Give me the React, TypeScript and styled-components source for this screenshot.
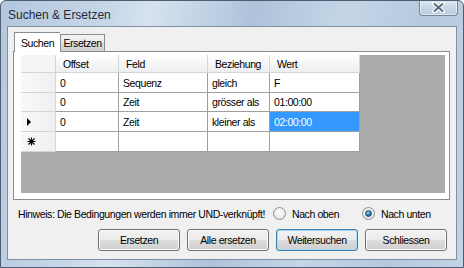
import React from "react";
import styled, { createGlobalStyle, css } from "styled-components";

const GlobalStyle = createGlobalStyle`
  html, body {
    margin: 0;
    padding: 0;
    background: #fff;
  }
  body {
    font-family: "Liberation Sans", Arial, sans-serif;
    font-size: 10.5px;
    letter-spacing: -0.4px;
    color: #000;
  }
`;

type Row = {
  offset: string;
  feld: string;
  beziehung: string;
  wert: string;
  current?: boolean;
};

const rows: Row[] = [
  { offset: "0", feld: "Sequenz", beziehung: "gleich", wert: "F" },
  { offset: "0", feld: "Zeit", beziehung: "grösser als", wert: "01:00:00" },
  { offset: "0", feld: "Zeit", beziehung: "kleiner als", wert: "02:00:00", current: true },
];

const columns = ["Offset", "Feld", "Beziehung", "Wert"];

const Window = styled.div`
  width: 464px;
  height: 268px;
  box-sizing: border-box;
  display: flex;
  flex-direction: column;
  border: 1px solid #4d5d72;
  border-radius: 6px 6px 0 0;
  background: linear-gradient(
    100deg,
    #b3c7dd 0%,
    #c8d7e8 22%,
    #d6e2ee 30%,
    #aec3da 50%,
    #c4d5e6 68%,
    #b5c9de 85%,
    #c3d3e5 100%
  );
  overflow: hidden;
`;

const TitleBar = styled.div`
  height: 25px;
  display: flex;
  justify-content: space-between;
  align-items: flex-start;
  padding: 0 5px 0 7px;
`;

const Title = styled.span`
  font-size: 12px;
  letter-spacing: 0;
  color: #1e2b3b;
  margin-top: 7px;
`;

const CloseButton = styled.div`
  width: 39px;
  height: 16px;
  margin-top: -1px;
  box-sizing: border-box;
  border: 1px solid #73859b;
  border-top: none;
  border-radius: 0 0 4px 4px;
  background: linear-gradient(#dfe8f2, #c9d7e6 50%, #b8cade);
  box-shadow: inset 0 0 0 1px rgba(255, 255, 255, 0.55);
  display: flex;
  align-items: center;
  justify-content: center;
`;

const Client = styled.div`
  flex: 1;
  margin: 0 6px 7px 6px;
  border: 1px solid #7f8fa4;
  background: #f0f0f0;
  display: flex;
  flex-direction: column;
  padding: 5px 6px 0 5px;
`;

const TabStrip = styled.div`
  display: flex;
  align-items: flex-end;
  height: 19px;
  padding-left: 1px;
  position: relative;
  z-index: 1;
`;

const Tab = styled.div<{ $active?: boolean }>`
  box-sizing: border-box;
  border: 1px solid #898c95;
  border-bottom: none;
  display: flex;
  align-items: center;
  justify-content: center;
  ${(p) =>
    p.$active
      ? css`
          width: 46px;
          height: 20px;
          margin-bottom: -1px;
          background: #fff;
          border-right: none;
        `
      : css`
          width: 45px;
          height: 17px;
          background: linear-gradient(#f2f2f2, #ebebeb 50%, #dddddd 50%, #cfcfcf);
        `}
`;

const TabPage = styled.div`
  height: 149px;
  box-sizing: border-box;
  border: 1px solid #898c95;
  background: #fff;
  padding: 3px 3px 5px 6px;
  display: flex;
`;

const GridView = styled.div`
  flex: 1;
  background: #ababab;
  border: 1px solid #fff;
  border-top: none;
  display: flex;
  align-items: flex-start;
`;

const GridTable = styled.div`
  display: grid;
  grid-template-columns: 35px 63px 89px 62px 90px;
  grid-template-rows: 18px 20px 19px 20px 20px;
`;

const HeaderCell = styled.div<{ $corner?: boolean }>`
  box-sizing: border-box;
  background: linear-gradient(#ffffff, #f5f6f7 50%, #eceef0);
  border-right: 1px solid #d5d5d5;
  border-bottom: 1px solid #d5d5d5;
  padding-left: 7px;
  display: flex;
  align-items: center;
  ${(p) =>
    p.$corner &&
    css`
      background: #f4f5f6;
    `}
`;

const RowHeader = styled.div`
  box-sizing: border-box;
  background: linear-gradient(90deg, #f7f8f9, #eef0f2);
  border-right: 1px solid #d5d5d5;
  border-bottom: 1px solid #d5d5d5;
  display: flex;
  align-items: center;
  padding-left: 6px;
`;

const Cell = styled.div<{ $selected?: boolean }>`
  box-sizing: border-box;
  background: ${(p) => (p.$selected ? "#3399ff" : "#fff")};
  color: ${(p) => (p.$selected ? "#fff" : "#000")};
  border-right: 1px solid #a0a0a0;
  border-bottom: 1px solid #a0a0a0;
  padding-left: 4px;
  display: flex;
  align-items: center;
  white-space: nowrap;
`;

const HintRow = styled.div`
  height: 27px;
  display: flex;
  align-items: center;
  padding-left: 5px;
`;

const Hint = styled.span`
  flex: 1;
  white-space: nowrap;
`;

const RadioLabel = styled.label<{ $width: number }>`
  width: ${(p) => p.$width}px;
  display: flex;
  align-items: center;
  gap: 6px;
  white-space: nowrap;
`;

const RadioCircle = styled.span<{ $checked?: boolean }>`
  width: 11px;
  height: 11px;
  border-radius: 50%;
  border: 1px solid #8e8f8f;
  background: radial-gradient(circle at 50% 40%, #ffffff, #dcdcdc);
  display: flex;
  align-items: center;
  justify-content: center;
  &::after {
    content: "";
    display: ${(p) => (p.$checked ? "block" : "none")};
    width: 5px;
    height: 5px;
    border-radius: 50%;
    background: radial-gradient(circle at 40% 35%, #8ad0f5, #1c5e8e 70%);
    border: 1px solid #1d4f76;
  }
`;

const ButtonRow = styled.div`
  display: flex;
  justify-content: flex-end;
  gap: 7px;
  padding: 2px 3px 0 0;
`;

const Button = styled.div<{ $default?: boolean }>`
  width: 82px;
  height: 22px;
  box-sizing: border-box;
  border: 1px solid ${(p) => (p.$default ? "#3c7fb1" : "#707070")};
  border-radius: 3px;
  background: linear-gradient(#f2f2f2, #ebebeb 48%, #dddddd 52%, #cfcfcf);
  box-shadow: inset 0 0 0 1px ${(p) => (p.$default ? "#a7d9f5" : "#fcfcfc")};
  display: flex;
  align-items: center;
  justify-content: center;
`;

const CloseIcon: React.FC = () => (
  <svg width="13" height="11" viewBox="0 0 13 11">
    <path d="M2 1.5 L11 9.5 M11 1.5 L2 9.5" stroke="#ffffff" strokeWidth="4" strokeLinecap="round" />
    <path d="M2.5 2 L10.5 9 M10.5 2 L2.5 9" stroke="#5d6a7c" strokeWidth="2" strokeLinecap="round" />
  </svg>
);

const Arrow: React.FC = () => (
  <svg width="5" height="8" viewBox="0 0 5 8">
    <path d="M0 0 L4 4 L0 8 Z" fill="#000" />
  </svg>
);

const NewRowStar: React.FC = () => (
  <svg width="9" height="9" viewBox="0 0 9 9">
    <path d="M4.5 0.5 V8.5 M0.5 4.5 H8.5 M1.5 1.5 L7.5 7.5 M7.5 1.5 L1.5 7.5" stroke="#000" strokeWidth="1.1" />
  </svg>
);

const App: React.FC = () => {
  return (
    <>
      <GlobalStyle />
      <Window>
        <TitleBar>
          <Title>Suchen &amp; Ersetzen</Title>
          <CloseButton>
            <CloseIcon />
          </CloseButton>
        </TitleBar>
        <Client>
          <TabStrip>
            <Tab $active>Suchen</Tab>
            <Tab>Ersetzen</Tab>
          </TabStrip>
          <TabPage>
            <GridView>
              <GridTable>
                <HeaderCell $corner />
                {columns.map((c) => (
                  <HeaderCell key={c}>{c}</HeaderCell>
                ))}
                {rows.map((r, i) => (
                  <React.Fragment key={i}>
                    <RowHeader>{r.current && <Arrow />}</RowHeader>
                    <Cell>{r.offset}</Cell>
                    <Cell>{r.feld}</Cell>
                    <Cell>{r.beziehung}</Cell>
                    <Cell $selected={r.current}>{r.wert}</Cell>
                  </React.Fragment>
                ))}
                <RowHeader>
                  <NewRowStar />
                </RowHeader>
                <Cell />
                <Cell />
                <Cell />
                <Cell />
              </GridTable>
            </GridView>
          </TabPage>
          <HintRow>
            <Hint>Hinweis: Die Bedingungen werden immer UND-verknüpft!</Hint>
            <RadioLabel $width={89}>
              <RadioCircle />
              Nach oben
            </RadioLabel>
            <RadioLabel $width={88}>
              <RadioCircle $checked />
              Nach unten
            </RadioLabel>
          </HintRow>
          <ButtonRow>
            <Button>Ersetzen</Button>
            <Button>Alle ersetzen</Button>
            <Button $default>Weitersuchen</Button>
            <Button>Schliessen</Button>
          </ButtonRow>
        </Client>
      </Window>
    </>
  );
};

export default App;
